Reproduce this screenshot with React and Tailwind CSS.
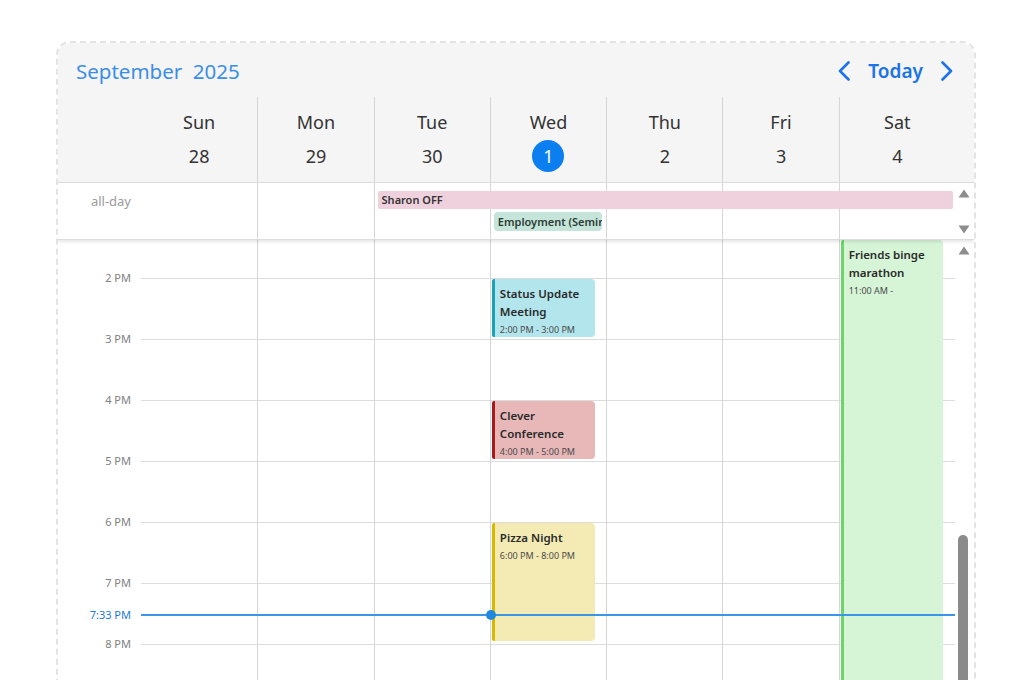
import React from "react";

const days = [
  ["Sun", "28"],
  ["Mon", "29"],
  ["Tue", "30"],
  ["Wed", "1"],
  ["Thu", "2"],
  ["Fri", "3"],
  ["Sat", "4"],
];

const hours = ["2 PM", "3 PM", "4 PM", "5 PM", "6 PM", "7 PM", "8 PM", ""];

function TriUp({ className = "" }) {
  return (
    <svg width="12" height="9" viewBox="0 0 12 9" className={className}>
      <polygon points="6,0.5 11.5,8.5 0.5,8.5" fill="#8d8d8d" />
    </svg>
  );
}
function TriDown({ className = "" }) {
  return (
    <svg width="12" height="9" viewBox="0 0 12 9" className={className}>
      <polygon points="0.5,0.5 11.5,0.5 6,8.5" fill="#8d8d8d" />
    </svg>
  );
}

function Event({ className, bar, bg, title, time }) {
  return (
    <div
      className={`absolute ${className} ${bg} border-l-[3px] ${bar} rounded-r-[4px] rounded-l-[2px] pl-[5px] pr-[4px] pt-[6px] overflow-hidden`}
    >
      <div className="text-[11.5px] leading-[18px] font-semibold text-[#2a2a2a]">{title}</div>
      <div className="text-[9px] leading-[18px] text-[#4a4a4a]">{time}</div>
    </div>
  );
}

export default function App() {
  return (
    <div className="h-[680px] w-[1024px] overflow-hidden bg-white font-['Noto_Sans',sans-serif] pt-[41px] pl-[56px]">
      <div className="w-[920px] h-[720px] rounded-[14px] border-2 border-dashed border-[#e3e3e3] overflow-hidden bg-white flex flex-col">
        {/* Header */}
        <div className="bg-[#f5f5f5]">
          <div className="h-[54px] flex items-center justify-between pl-[18px] pr-[21px] pt-[2px]">
            <div className="text-[20.5px] text-[#3a8ee8]">September&nbsp; 2025</div>
            <div className="flex items-center gap-[18px] text-[#1a73e8]">
              <svg width="12" height="20" viewBox="0 0 12 20">
                <polyline points="10.5,1.5 2,10 10.5,18.5" fill="none" stroke="#1a73e8" strokeWidth="2.6" strokeLinecap="round" strokeLinejoin="round" />
              </svg>
              <span className="text-[19px] font-semibold leading-none">Today</span>
              <svg width="12" height="20" viewBox="0 0 12 20">
                <polyline points="1.5,1.5 10,10 1.5,18.5" fill="none" stroke="#1a73e8" strokeWidth="2.6" strokeLinecap="round" strokeLinejoin="round" />
              </svg>
            </div>
          </div>
          <div className="grid grid-cols-[83px_repeat(7,1fr)_19px] h-[86px] border-b border-[#dcdcdc]">
            <div />
            {days.map(([n, d], i) => (
              <div
                key={n}
                className={`flex flex-col items-center pt-[13px] text-[18px] text-[#333] ${i > 0 ? "border-l border-[#d6d6d6]" : ""}`}
              >
                <div className="h-[24px] leading-[24px]">{n}</div>
                <div className="mt-[6px] h-[32px] flex items-center justify-center">
                  {d === "1" ? (
                    <div className="w-[32px] h-[32px] rounded-full bg-[#0b7ef0] text-white flex items-center justify-center leading-none">
                      1
                    </div>
                  ) : (
                    <span className="leading-none">{d}</span>
                  )}
                </div>
              </div>
            ))}
            <div />
          </div>
        </div>

        {/* All-day row */}
        <div className="relative z-10 grid grid-cols-[83px_repeat(7,1fr)_19px] grid-rows-[8px_18px_3px_19px_1fr] h-[57px] border-b border-[#dcdcdc] bg-white shadow-[0_2px_3px_rgba(0,0,0,0.10)]">
          <div className="col-start-1 row-start-1 row-end-6 text-right pr-[10px] pt-[9px] text-[13px] leading-[18px] text-[#9a9a9a]">
            all-day
          </div>
          {days.map(([n], i) => (
            <div
              key={n}
              className={`row-start-1 row-end-6 ${
                ["col-start-2", "col-start-3", "col-start-4", "col-start-5", "col-start-6", "col-start-7", "col-start-8"][i]
              } ${i > 0 ? "border-l border-[#d6d6d6]" : ""}`}
            />
          ))}
          <div className="col-start-9 row-start-1 row-end-6 flex flex-col items-center pt-[6px] pr-[1px]">
            <TriUp />
            <TriDown className="mt-[27px]" />
          </div>
          <div className="col-start-4 col-end-10 row-start-2 ml-[4px] mr-[21px] bg-[#efd1dd] rounded-[2px] pl-[4px] text-[11px] leading-[18px] font-semibold text-[#333] whitespace-nowrap">
            Sharon OFF
          </div>
          <div className="col-start-5 row-start-4 mx-[4px] bg-[#c6e5da] rounded-[4px] pl-[4px] text-[11px] leading-[19px] font-semibold text-[#2b3b35] whitespace-nowrap overflow-hidden">
            Employment (Seminar)
          </div>
        </div>

        {/* Body */}
        <div className="relative flex-1 grid grid-cols-[83px_repeat(7,1fr)_19px] overflow-hidden">
          {/* gutter */}
          <div className="flex flex-col">
            <div className="h-[38px] shrink-0" />
            {hours.map((h, k) => (
              <div key={k} className="h-[61px] shrink-0 text-right pr-[10px]">
                {h && <div className="-mt-[7px] text-[11px] leading-[14px] text-[#808080]">{h}</div>}
                {h === "7 PM" && (
                  <div className="mt-[18px] text-[11px] leading-[14px] text-[#1a7ad8]">7:33 PM</div>
                )}
              </div>
            ))}
          </div>

          {days.map(([n], i) => (
            <div key={n} className={`relative flex flex-col ${i > 0 ? "border-l border-[#d6d6d6]" : ""}`}>
              <div className="h-[38px] shrink-0" />
              {hours.map((h, k) => (
                <div key={k} className="h-[61px] shrink-0 border-t border-[#dcdcdc]" />
              ))}
              {n === "Wed" && (
                <>
                  <Event
                    className="top-[39px] left-[1px] right-[11px] h-[58px]"
                    bar="border-[#17a2b8]"
                    bg="bg-[#b3e5ec]"
                    title="Status Update Meeting"
                    time="2:00 PM - 3:00 PM"
                  />
                  <Event
                    className="top-[161px] left-[1px] right-[11px] h-[58px]"
                    bar="border-[#a8191c]"
                    bg="bg-[#e8b8b9]"
                    title={"Clever Conference"}
                    time="4:00 PM - 5:00 PM"
                  />
                  <Event
                    className="top-[283px] left-[1px] right-[11px] h-[118px]"
                    bar="border-[#d9b800]"
                    bg="bg-[#f4eab4]"
                    title="Pizza Night"
                    time="6:00 PM - 8:00 PM"
                  />
                </>
              )}
              {n === "Sat" && (
                <Event
                  className="top-0 left-[1px] right-[12px] bottom-0"
                  bar="border-[#6bd66b]"
                  bg="bg-[#d6f4d6]"
                  title="Friends binge marathon"
                  time="11:00 AM -"
                />
              )}
            </div>
          ))}

          {/* scroll gutter */}
          <div className="flex flex-col items-center">
            <TriUp className="mt-[6px] mr-[1px]" />
            <div className="mt-[280px] ml-[-2px] w-[10px] h-[200px] rounded-full bg-[#8a8a8a]" />
          </div>

          {/* now indicator */}
          <div className="absolute z-20 top-[374px] left-[83px] right-[19px] h-[2px] bg-[#3b95e8]">
            <div className="absolute left-[345px] -top-[4px] w-[10px] h-[10px] rounded-full bg-[#2088e0]" />
          </div>
        </div>
      </div>
    </div>
  );
}
